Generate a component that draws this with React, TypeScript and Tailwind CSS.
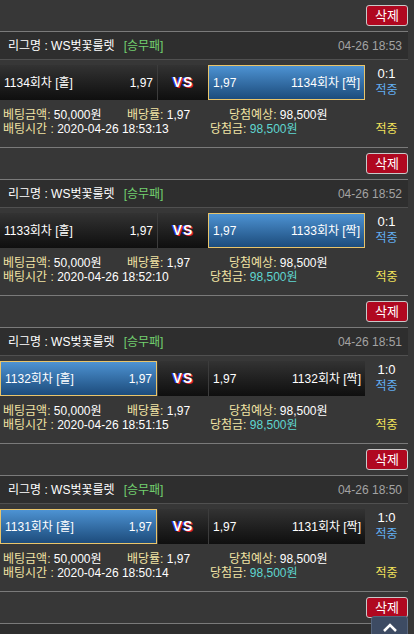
import React from "react";

type Bet = {
  round: number;
  time: string;
  placed: string;
  pick: "home" | "away";
  score: string;
};

const bets: Bet[] = [
  { round: 1134, time: "04-26 18:53", placed: "2020-04-26 18:53:13", pick: "away", score: "0:1" },
  { round: 1133, time: "04-26 18:52", placed: "2020-04-26 18:52:10", pick: "away", score: "0:1" },
  { round: 1132, time: "04-26 18:51", placed: "2020-04-26 18:51:15", pick: "home", score: "1:0" },
  { round: 1131, time: "04-26 18:50", placed: "2020-04-26 18:50:14", pick: "home", score: "1:0" },
];

const darkCell = "bg-gradient-to-b from-[#333333] to-[#0f0f0f]";
const blueCell = "bg-gradient-to-b from-[#4d93d3] to-[#1d4c7c] border border-[#e9c46a]";

const DeleteRow = () => (
  <div className="h-[31px] flex items-start justify-end pt-[5px]">
    <button className="w-[42px] h-[21px] bg-[#b00820] border border-[#c9c9c9] rounded-[3px] text-white text-[13px] leading-none">
      삭제
    </button>
  </div>
);

const BetCard = ({ bet }: { bet: Bet }) => {
  const home = bet.pick === "home";
  return (
    <div className="border-t border-b border-[#7a7a7a]">
      {/* header */}
      <div className="h-[28px] bg-[#2e2e2e] border-b border-[#505050] flex items-center pl-[8px] pr-[6px] text-[12px]">
        <span className="text-white">리그명 : WS벚꽃룰렛</span>
        <span className="ml-[9px] text-[#72d06e]">[승무패]</span>
        <span className="ml-auto text-[#a3a3a3]">{bet.time}</span>
      </div>

      {/* bet row */}
      <div className="pt-[5px] flex h-[40px] text-[12px] text-white">
        <div className={`w-[157px] h-[35px] flex items-center justify-between px-[4px] ${home ? blueCell : darkCell}`}>
          <span>{bet.round}회차 [홀]</span>
          <span>1,97</span>
        </div>
        <div className={`w-[51px] h-[35px] flex items-center justify-center border-l border-[#3c3c3c] ${darkCell}`}>
          <span className="font-black text-[14px] tracking-[1px] [text-shadow:1px_1px_0_#e0202a,-1px_0_0_#2a3cff]">
            VS
          </span>
        </div>
        <div className={`w-[157px] h-[35px] flex items-center justify-between px-[4px] ${home ? darkCell + " border-l border-[#3c3c3c]" : blueCell}`}>
          <span>1,97</span>
          <span>{bet.round}회차 [짝]</span>
        </div>
        <div className="w-[43px] flex flex-col items-center pt-[1px] leading-[16px]">
          <span className="text-[13px] text-white">{bet.score}</span>
          <span className="text-[#62aef2]">적중</span>
        </div>
      </div>

      {/* info */}
      <div className="h-[47px] pt-[8px] text-[12px] leading-[14px]">
        <div className="flex pl-[3px]">
          <div className="w-[124px]">
            <span className="text-[#f1e3a4]">베팅금액:</span> <span className="text-white">50,000원</span>
          </div>
          <div className="w-[102px]">
            <span className="text-[#f1e3a4]">배당률:</span> <span className="text-white">1,97</span>
          </div>
          <div>
            <span className="text-[#f1e3a4]">당첨예상:</span> <span className="text-white">98,500원</span>
          </div>
        </div>
        <div className="flex pl-[3px]">
          <div className="w-[207px]">
            <span className="text-[#f1e3a4]">배팅시간 : </span>
            <span className="text-white">{bet.placed}</span>
          </div>
          <div className="flex-1">
            <span className="text-[#f1e3a4]">당첨금:</span> <span className="text-[#5fd6d0]">98,500원</span>
          </div>
          <div className="w-[43px] text-center text-[#f2e25a]">적중</div>
        </div>
      </div>
    </div>
  );
};

export default function App() {
  return (
    <div
      className="min-h-screen w-full bg-[#373737] overflow-hidden"
      style={{ fontFamily: '"Liberation Sans", "Noto Sans CJK KR", sans-serif' }}
    >
      <div className="w-[408px]">
        {bets.map((b) => (
          <div key={b.round}>
            <DeleteRow />
            <BetCard bet={b} />
          </div>
        ))}
        <DeleteRow />
        <div className="border-t border-[#7a7a7a] h-[40px] bg-[#2e2e2e]" />
      </div>

      {/* scroll to top */}
      <button className="fixed right-[6px] top-[616px] w-[37px] h-[34px] bg-[#3d4b63] border border-[#56657d] rounded-t-[3px] flex flex-col items-center pt-[6px]">
        <svg width="16" height="9" viewBox="0 0 16 9" fill="none">
          <path d="M2 8 L8 2 L14 8" stroke="white" strokeWidth="2.5" />
        </svg>
        <span className="text-white text-[9px] font-bold leading-none mt-[2px]">TOP</span>
      </button>
    </div>
  );
}
